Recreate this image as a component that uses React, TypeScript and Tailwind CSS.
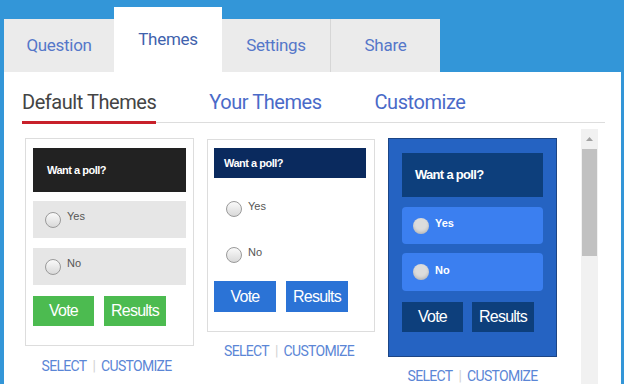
import React from "react";

const roboto = { fontFamily: "Roboto, 'Liberation Sans', sans-serif" };
const arial = { fontFamily: "'Liberation Sans', Arial, sans-serif" };

const Radio = ({ filled }: { filled?: boolean }) =>
  filled ? (
    <span className="inline-block w-[16px] h-[16px] rounded-full bg-[#dcdcdc] shadow-[inset_0_-2px_3px_rgba(0,0,0,0.15)]" />
  ) : (
    <span className="inline-block w-[16px] h-[16px] rounded-full border border-[#9a9a9a] bg-gradient-to-b from-[#fafafa] to-[#d9d9d9]" />
  );

const Links = ({ className }: { className: string }) => (
  <div className={"flex items-center text-[14px] text-[#5b86d6] tracking-[-0.7px] " + className} style={roboto}>
    <span>SELECT</span>
    <span className="mx-[6px] text-[#d2d2d2]">|</span>
    <span>CUSTOMIZE</span>
  </div>
);

export default function App() {
  return (
    <div className="w-[624px] h-[384px] overflow-hidden bg-[#3396d8] pl-[4px] pr-[3px] flex flex-col">
      {/* main tabs */}
      <div className="flex items-end h-[72px] shrink-0 text-[17px] tracking-[-0.3px]" style={roboto}>
        <div className="w-[110px] h-[53px] bg-[#ebebeb] flex items-center justify-center text-[#5577c9]">Question</div>
        <div className="w-[108px] h-[65px] bg-white flex justify-center pt-[20px] text-[#3f62ad]">Themes</div>
        <div className="w-[109px] h-[53px] bg-[#ebebeb] border-r border-[#d6d6d6] flex items-center justify-center text-[#5577c9]">Settings</div>
        <div className="w-[109px] h-[53px] bg-[#ebebeb] flex items-center justify-center text-[#5577c9]">Share</div>
      </div>

      {/* panel */}
      <div className="flex-1 bg-white flex flex-col">
        <div className="ml-[18px] mr-[16px] mt-[16px] border-b border-[#dddddd] flex gap-[53px] text-[20px] leading-[28px] tracking-[-0.45px]" style={roboto}>
          <div className="text-[#444444] border-b-[3px] border-[#c8202a] -mb-[2px] pb-[5px]">Default Themes</div>
          <div className="text-[#4a6ac8]">Your Themes</div>
          <div className="text-[#4a6ac8]">Customize</div>
        </div>

        <div className="flex flex-1">
          <div className="flex items-start gap-[13px] pl-[21px] pt-[15px]">
            {/* card 1 */}
            <div className="flex flex-col items-center">
              <div className="w-[169px] h-[208px] border border-[#dddddd] px-[7px] pt-[9px] flex flex-col" style={arial}>
                <div className="h-[44px] bg-[#222222] text-white text-[11px] font-bold tracking-[-0.5px] flex items-center pl-[14px]">Want a poll?</div>
                <div className="mt-[9px] h-[37px] bg-[#e6e6e6] flex items-center pl-[12px] gap-[6px] text-[11px] text-[#555]">
                  <Radio />
                  <span className="-mt-[6px]">Yes</span>
                </div>
                <div className="mt-[10px] h-[37px] bg-[#e6e6e6] flex items-center pl-[12px] gap-[6px] text-[11px] text-[#555]">
                  <Radio />
                  <span className="-mt-[6px]">No</span>
                </div>
                <div className="mt-[11px] flex gap-[10px] text-white text-[16px] tracking-[-0.8px]">
                  <div className="w-[61px] h-[30px] bg-[#4cbb50] flex items-center justify-center">Vote</div>
                  <div className="w-[62px] h-[30px] bg-[#4cbb50] flex items-center justify-center">Results</div>
                </div>
              </div>
              <Links className="mt-[10px] -ml-[6px]" />
            </div>

            {/* card 2 */}
            <div className="flex flex-col items-center mt-[1px]">
              <div className="w-[168px] h-[193px] border border-[#dddddd] pl-[6px] pr-[8px] pt-[8px] flex flex-col" style={arial}>
                <div className="h-[30px] bg-[#0a2a5e] text-white text-[11px] font-bold tracking-[-0.5px] flex items-center pl-[10px]">Want a poll?</div>
                <div className="mt-[10px] h-[42px] flex items-center pl-[12px] gap-[6px] text-[11px] text-[#555]">
                  <Radio />
                  <span className="-mt-[6px]">Yes</span>
                </div>
                <div className="mt-[4px] h-[42px] flex items-center pl-[12px] gap-[6px] text-[11px] text-[#555]">
                  <Radio />
                  <span className="-mt-[6px]">No</span>
                </div>
                <div className="mt-[5px] flex gap-[10px] text-white text-[16px] tracking-[-0.8px]">
                  <div className="w-[62px] h-[31px] bg-[#2b73d6] flex items-center justify-center">Vote</div>
                  <div className="w-[62px] h-[31px] bg-[#2b73d6] flex items-center justify-center">Results</div>
                </div>
              </div>
              <Links className="mt-[9px] -ml-[4px]" />
            </div>

            {/* card 3 */}
            <div className="flex flex-col items-center">
              <div className="w-[169px] h-[219px] bg-[#2563c2] border border-[#1c4585] px-[13px] pt-[14px] flex flex-col" style={arial}>
                <div className="h-[44px] bg-[#0d3f7c] text-white text-[13px] font-bold tracking-[-0.7px] flex items-center pl-[13px]">Want a poll?</div>
                <div className="mt-[10px] h-[37px] bg-[#3b7ff0] rounded-[4px] flex items-center pl-[11px] gap-[6px] text-[11px] font-bold text-white">
                  <Radio filled />
                  <span className="-mt-[4px]">Yes</span>
                </div>
                <div className="mt-[9px] h-[38px] bg-[#3b7ff0] rounded-[4px] flex items-center pl-[11px] gap-[6px] text-[11px] font-bold text-white">
                  <Radio filled />
                  <span className="-mt-[4px]">No</span>
                </div>
                <div className="mt-[11px] flex gap-[9px] text-white text-[16px] tracking-[-0.8px]">
                  <div className="w-[61px] h-[30px] bg-[#0d3f7c] flex items-center justify-center">Vote</div>
                  <div className="w-[62px] h-[30px] bg-[#0d3f7c] flex items-center justify-center">Results</div>
                </div>
              </div>
              <Links className="mt-[9px]" />
            </div>
          </div>

          {/* scrollbar */}
          <div className="ml-auto mr-[23px] mt-[6px] w-[17px] bg-[#f1f1f1] flex flex-col items-center">
            <svg width="17" height="20" viewBox="0 0 17 20">
              <path d="M5 12 L8.5 8 L12 12 Z" fill="#a3a3a3" />
            </svg>
            <div className="w-[15px] h-[107px] bg-[#c1c1c1]" />
          </div>
        </div>
      </div>
    </div>
  );
}
